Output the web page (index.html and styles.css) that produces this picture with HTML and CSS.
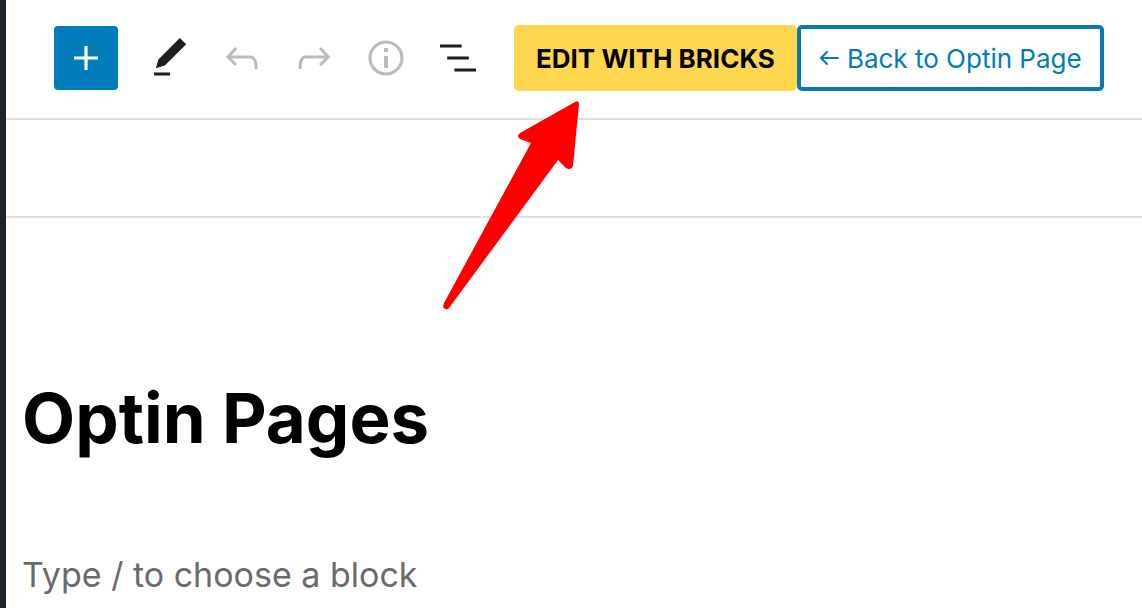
FILE: index.html
```html
<!doctype html>
<html lang="en">
<head>
<meta charset="UTF-8">
<title>Optin Pages</title>
<link rel="stylesheet" href="styles.css">
</head>
<body>
	<div class="editor">
		<header class="toolbar">
			<button type="button" class="inserter" aria-label="Add block">
				<svg viewBox="0 0 24 24"><path d="M18 11.2h-5.2V6h-1.6v5.2H6v1.6h5.2V18h1.6v-5.2H18z"/></svg>
			</button>
			<div class="tools">
				<button type="button" class="tool" aria-label="Tools">
					<svg viewBox="0 0 24 24"><path d="M20.1 5.1L16.9 2 6.2 12.7l-1.3 4.4 4.5-1.3L20.1 5.1zM4 20.8h8v-1.5H4v1.5z"/></svg>
				</button>
				<button type="button" class="tool" aria-label="Undo" disabled>
					<svg viewBox="0 0 24 24"><path d="M18.3 11.7c-.6-.6-1.4-.9-2.3-.9H6.7l2.9-3.3-1.1-1-4.5 5L8.5 16l1-1-2.7-2.7H16c.5 0 .9.2 1.3.5 1 1 1 3.4 1 4.5v.3h1.5v-.2c0-1.5 0-4.3-1.5-5.7z"/></svg>
				</button>
				<button type="button" class="tool" aria-label="Redo" disabled>
					<svg viewBox="0 0 24 24"><path d="M15.6 6.5l-1.1 1 2.9 3.3H8c-.9 0-1.7.3-2.3.9-1.4 1.5-1.4 4.2-1.4 5.6v.2h1.5v-.3c0-1.1 0-3.5 1-4.5.3-.3.7-.5 1.3-.5h9.2L14.5 15l1.1 1.1 4.6-4.6-4.6-5z"/></svg>
				</button>
				<button type="button" class="tool" aria-label="Details" disabled>
					<svg viewBox="0 0 24 24"><path d="M12 3.2c-4.8 0-8.8 3.9-8.8 8.8 0 4.8 3.9 8.8 8.8 8.8 4.8 0 8.8-3.9 8.8-8.8 0-4.8-4-8.8-8.8-8.8zm0 16c-4 0-7.2-3.3-7.2-7.2C4.8 8 8 4.8 12 4.8s7.2 3.3 7.2 7.2c0 4-3.2 7.2-7.2 7.2zM11 17h2v-6h-2v6zm0-8h2V7h-2v2z"/></svg>
				</button>
				<button type="button" class="tool" aria-label="List view">
					<svg viewBox="0 0 24 24"><path d="M13.8 5.2H3v1.5h10.8V5.2zm-3.6 12v1.5H21v-1.5H10.2zm7.2-6H6.6v1.5h10.8v-1.5z"/></svg>
				</button>
			</div>
			<div class="actions">
				<a href="#" class="button button-bricks">EDIT WITH BRICKS</a>
				<a href="#" class="button button-back">
					<svg class="back-arrow" viewBox="0 0 20 18"><path d="M19 9H2M8 3L2 9l6 6"/></svg>
					Back to Optin Page
				</a>
			</div>
			<!-- pointer to the Bricks button -->
			<svg class="pointer" viewBox="0 0 136 210"><path d="M132 1Q136-1 136 3L130 65Q128 70 123 67L115 59 6 207Q3 210 0 206L1 202 88 42 77 38Q73 35 77 32Z"/></svg>
		</header>
		<div class="block-bar"></div>
		<main class="canvas">
			<h1 class="post-title">Optin Pages</h1>
			<input type="text" class="block-input" aria-label="Add block" placeholder="Type / to choose a block">
		</main>
	</div>
</body>
</html>
```

FILE: styles.css
```css
* {
	box-sizing:border-box;
	}

body {
	margin:0;
	font-family:Inter, "Liberation Sans", sans-serif;
	color:#000;
	background:#fff;
	}

.editor {
	min-height:100vh;
	border-left:6px solid #1d2327;
	}

.toolbar {
	position:relative;
	display:flex;
	align-items:center;
	height:120px;
	padding:0 38px 2px 48px;
	border-bottom:2px solid #e0e0e0;
	}

.inserter, .tool {
	display:flex;
	align-items:center;
	justify-content:center;
	flex:none;
	height:64px;
	padding:0;
	border:0;
	background:none;
	color:#1e1e1e;
	}

.inserter {
	width:64px;
	border-radius:4px;
	background:#007cba;
	color:#fff;
	}

.inserter svg, .tool svg {
	width:48px;
	height:48px;
	fill:currentColor;
	}

.tools {
	display:flex;
	margin:0 20px 0 16px;
	}

.tool {
	width:72px;
	}

.tool:disabled {
	color:#bbb;
	}

.actions {
	display:flex;
	}

.button {
	display:flex;
	align-items:center;
	height:66px;
	padding:0 22px;
	border-radius:5px;
	font-size:26px;
	white-space:nowrap;
	text-decoration:none;
	}

.button-bricks {
	background:#ffd64f;
	color:#000;
	font-weight:700;
	}

.button-back {
	gap:8px;
	padding:0 18px;
	border:4px solid #0a78b5;
	color:#007cba;
	}

.back-arrow {
	width:20px;
	height:18px;
	fill:none;
	stroke:currentColor;
	stroke-width:2;
	stroke-linecap:round;
	stroke-linejoin:round;
	}

.pointer {
	position:absolute;
	top:101px;
	left:437px;
	width:136px;
	height:210px;
	fill:#f00;
	overflow:visible;
	}

.block-bar {
	height:98px;
	border-bottom:2px solid #e0e0e0;
	}

.canvas {
	padding:158px 16px 0;
	}

.post-title {
	margin:0 0 88px;
	font-size:69px;
	line-height:84px;
	font-weight:700;
	}

.block-input {
	display:block;
	width:100%;
	height:52px;
	padding:0;
	border:0;
	outline:0;
	font-family:inherit;
	font-size:34px;
	}

.block-input::placeholder {
	color:#6b6b6b;
	opacity:1;
	}
```
